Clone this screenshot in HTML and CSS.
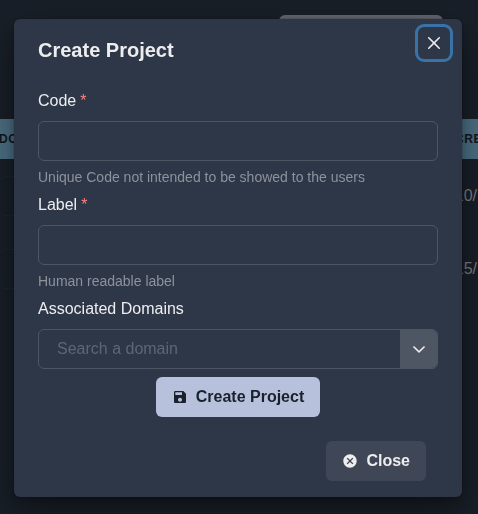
FILE: index.html
```html
<!DOCTYPE html>
<html lang="en">
<head>
<meta charset="utf-8">
<title>Create Project</title>
<link rel="stylesheet" href="styles.css">
</head>
<body>
<main class="page">
  <div class="toolbar"><div class="toolbar-button"></div></div>
  <div class="table-head"><span class="domain">DO</span><span class="created">CRE</span></div>
  <div class="table-row"><div class="domain-box"></div><span class="date">10/</span></div>
  <div class="table-row"><div class="domain-box"></div><span class="date">15/</span></div>
</main>
<div class="overlay">
  <section class="modal" role="dialog" aria-labelledby="title">
    <header class="modal-header" id="title">Create Project</header>
    <button class="modal-x" aria-label="Close">
      <svg viewBox="0 0 24 24" width="12" height="12"><path fill="currentColor" d="M.439,21.44a1.5,1.5,0,0,0,2.122,2.121L11.823,14.3a.25.25,0,0,1,.354,0l9.262,9.263a1.5,1.5,0,1,0,2.122-2.121L14.3,12.177a.25.25,0,0,1,0-.354l9.263-9.262A1.5,1.5,0,0,0,21.439.44L12.177,9.7a.25.25,0,0,1-.354,0L2.561.44A1.5,1.5,0,0,0,.439,2.561L9.7,11.823a.25.25,0,0,1,0,.354Z"/></svg>
    </button>
    <form class="modal-body">
      <label class="label" for="code">Code<span class="required">*</span></label>
      <input class="input" id="code">
      <div class="helper">Unique Code not intended to be showed to the users</div>
      <label class="label" for="label">Label<span class="required">*</span></label>
      <input class="input" id="label">
      <div class="helper">Human readable label</div>
      <label class="label" for="domains">Associated Domains</label>
      <div class="select">
        <input class="select-input" id="domains" placeholder="Search a domain">
        <div class="select-toggle">
          <svg viewBox="0 0 24 24" width="24" height="24"><path fill="currentColor" d="M17 8.900L12 13.800 7 8.900 5.900 10l6.100 6 6.100-6z"/></svg>
        </div>
      </div>
      <button class="button primary" type="button">
        <svg viewBox="0 0 24 24" width="16" height="16"><path fill="currentColor" d="M17 3H5c-1.110 0-2 .9-2 2v14c0 1.100.89 2 2 2h14c1.100 0 2-.9 2-2V7l-4-4zm-5 16c-1.660 0-3-1.340-3-3s1.340-3 3-3 3 1.340 3 3-1.340 3-3 3zm3-10H5V5h10v4z"/></svg>
        Create Project
      </button>
    </form>
    <footer class="modal-footer">
      <button class="button close">
        <svg viewBox="0 0 24 24" width="16" height="16"><path fill="currentColor" d="M12 2C6.470 2 2 6.470 2 12s4.470 10 10 10 10-4.470 10-10S17.530 2 12 2zm5 13.590L15.590 17 12 13.410 8.410 17 7 15.590 10.590 12 7 8.410 8.410 7 12 10.590 15.590 7 17 8.410 13.410 12 17 15.590z"/></svg>
        Close
      </button>
    </footer>
  </section>
</div>
</body>
</html>
```
FILE: styles.css
```css
* { box-sizing: border-box; }
body {
  margin: 0;
  height: 514px;
  overflow: hidden;
  background: #191f28;
  color: #ededee;
  font: 16px/24px "Liberation Sans", Arial, sans-serif;
}
svg { display: block; flex: none; }
button, input { font: inherit; color: inherit; }

.page { height: 514px; padding-top: 15px; }
.toolbar { height: 104px; padding-left: 279px; }
.toolbar-button { width: 164px; height: 40px; border-radius: 6px; background: #62656f; }
.table-head {
  display: flex;
  align-items: center;
  justify-content: space-between;
  height: 40px;
  background: #4c7084;
  color: #12171f;
  font-size: 12px;
  font-weight: 700;
  letter-spacing: .6px;
}
.domain { margin-left: -1px; }
.created { width: 23px; white-space: nowrap; }
.table-row { display: flex; align-items: center; height: 73px; }
.domain-box {
  width: 60px;
  height: 40px;
  margin-left: -1px;
  border: 1px solid #1f242d;
  border-radius: 6px;
}
.date { margin-left: auto; margin-right: 1px; color: #7c7d80; }

.overlay {
  position: fixed;
  inset: 0;
  display: flex;
  justify-content: center;
  align-items: flex-start;
  padding: 19px 2px 0 0;
}
.modal {
  position: relative;
  width: 448px;
  border-radius: 6px;
  background: #2d3748;
  box-shadow: rgba(0,0,0,.1) 0 0 0 1px, rgba(0,0,0,.2) 0 5px 10px, rgba(0,0,0,.4) 0 15px 40px;
}
.modal-header { padding: 16px 24px; font-size: 20px; line-height: 30px; font-weight: 700; }
.modal-x {
  position: absolute;
  top: 8px;
  right: 12px;
  display: flex;
  align-items: center;
  justify-content: center;
  width: 32px;
  height: 32px;
  padding: 0;
  border: 0;
  border-radius: 6px;
  background: none;
  box-shadow: 0 0 0 3px #3a72a5;
}
.modal-body { display: flex; flex-direction: column; padding: 8px 24px; }
.label { margin-bottom: 8px; }
.required { margin-left: 4px; color: #fc8181; }
.input {
  height: 40px;
  padding: 0 16px;
  border: 1px solid #4e5665;
  border-radius: 6px;
  background: none;
}
.helper { margin: 8px 0; color: #8d929b; font-size: 14px; line-height: 16px; }
.select {
  display: flex;
  height: 40px;
  margin-bottom: 8px;
  border: 1px solid #4e5665;
  border-radius: 6px;
  overflow: hidden;
}
.select-input { flex: 1; min-width: 0; padding: 0 18px; border: 0; background: none; }
.select-input::placeholder { color: #5e6673; opacity: 1; }
.select-toggle { display: flex; align-items: center; justify-content: center; width: 37px; background: #4e5563; }
.button {
  display: flex;
  align-items: center;
  gap: 8px;
  height: 40px;
  padding: 0 16px;
  border: 0;
  border-radius: 6px;
  font-weight: 700;
}
.primary { align-self: center; background: #b8c1dc; color: #1a202c; }
.modal-footer { display: flex; justify-content: flex-end; padding: 16px 24px; }
.close { margin-right: 12px; background: #3f4756; }
```
